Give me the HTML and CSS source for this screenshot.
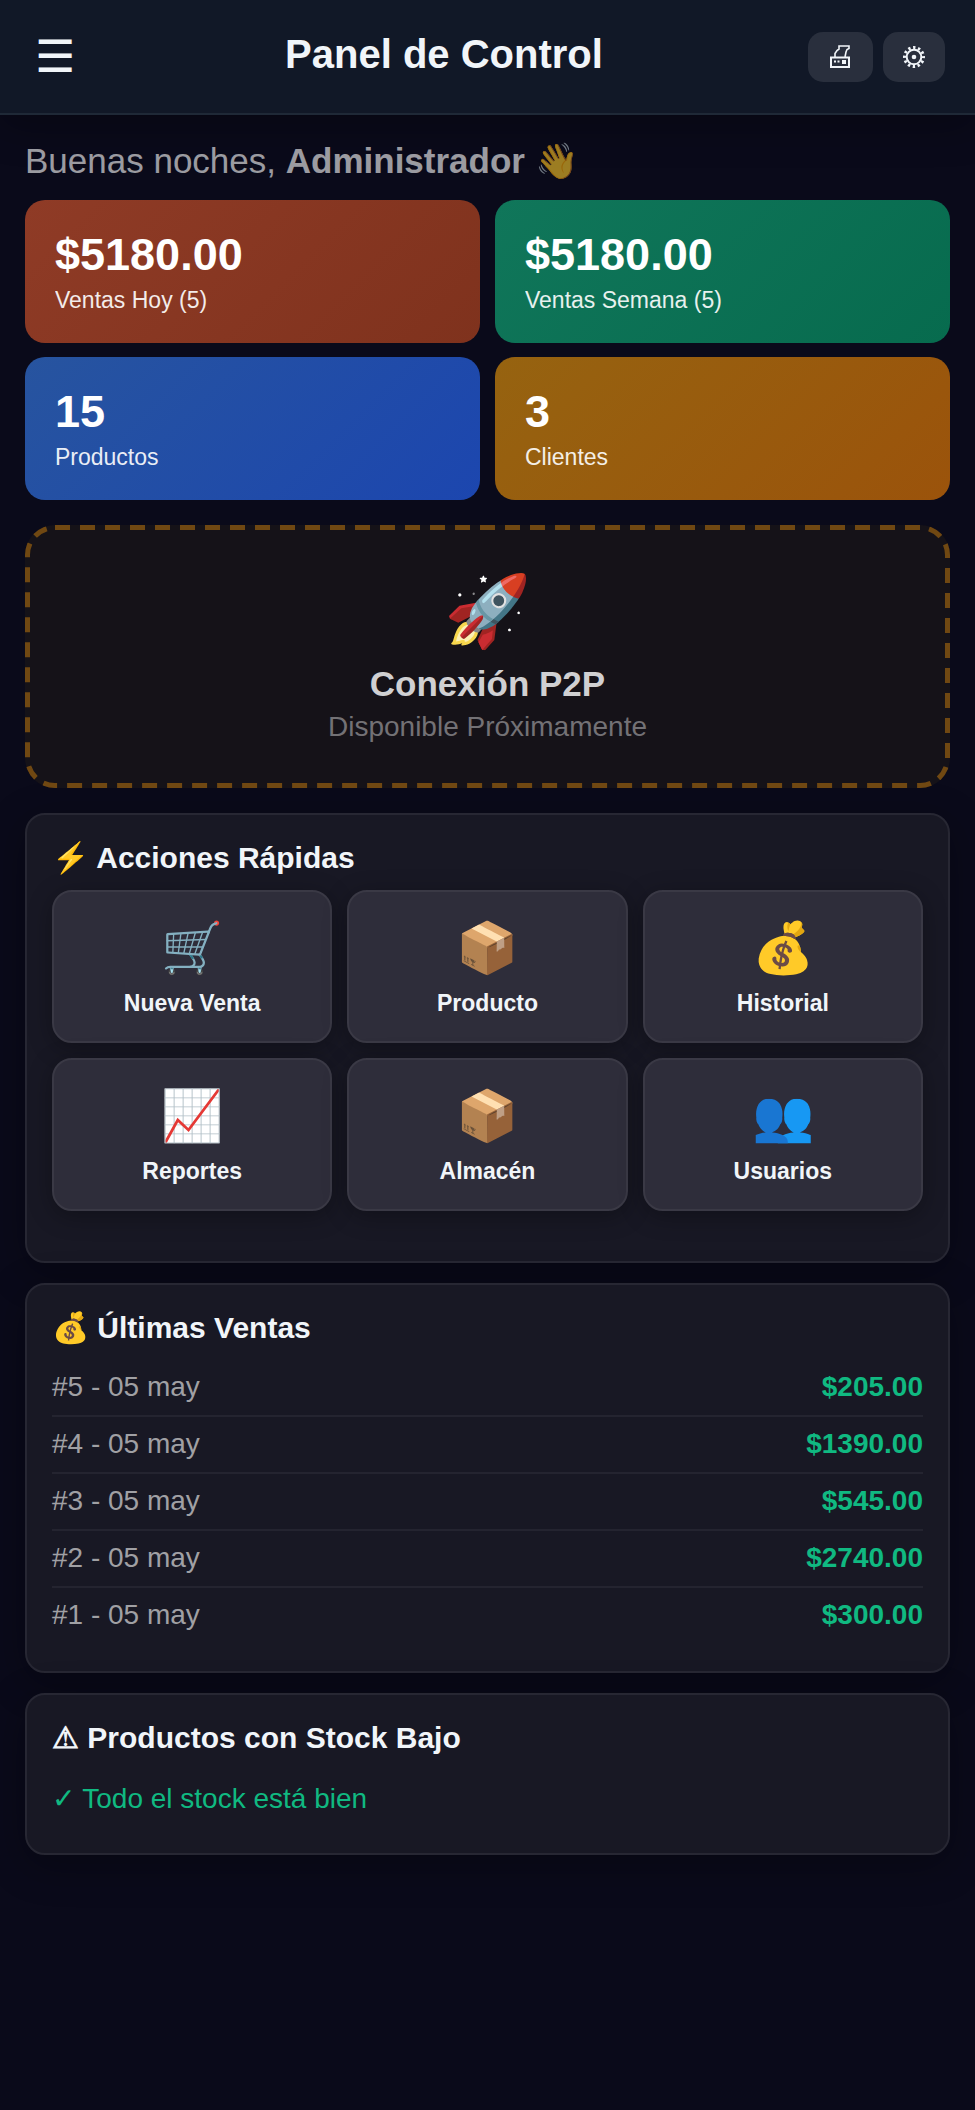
FILE: index.html
```
<!DOCTYPE html>
<html lang="es">
<head>
    <meta charset="UTF-8">
    <meta name="viewport" content="width=device-width, initial-scale=1.0">
    <title>Panel de Control</title>
    <link rel="stylesheet" href="styles.css">
</head>
<body>
    <header class="header">
        <button class="menu-btn" type="button" aria-label="Menú">☰</button>
        <h1>Panel de Control</h1>
        <div class="header-actions">
            <button class="header-btn" type="button" aria-label="Imprimir">
                <svg width="25" height="25" viewBox="-2 -1 25 25" fill="none" stroke="currentColor" stroke-width="1.6">
                    <path d="M1 12.5h18v9.5H1z" stroke-width="2"/>
                    <path d="M5 12V8.5L7 5.5 9 4V1h10v2.5l-2 1-1 2.5-1 5"/>
                    <path d="M4 15.5h2v2H4zM7.5 15.5h2v2h-2zM12 15h4v4h-4z" fill="currentColor" stroke="none"/>
                </svg>
            </button>
            <button class="header-btn" type="button" aria-label="Ajustes">
                <svg width="22" height="22" viewBox="0 0 22 22" fill="none" stroke="currentColor">
                    <circle cx="11" cy="11" r="7.3" stroke-width="2"/>
                    <circle cx="11" cy="11" r="9.5" stroke-width="3" stroke-dasharray="2.4 2.574" stroke-dashoffset="1.2"/>
                    <circle cx="11" cy="11" r="2.3" fill="currentColor" stroke="none"/>
                </svg>
            </button>
        </div>
    </header>

    <main class="content">
        <p class="greeting">Buenas noches, <strong>Administrador</strong> 👋</p>

        <section class="stats">
            <div class="stat stat-today">
                <div class="stat-value">$5180.00</div>
                <div class="stat-label">Ventas Hoy (5)</div>
            </div>
            <div class="stat stat-week">
                <div class="stat-value">$5180.00</div>
                <div class="stat-label">Ventas Semana (5)</div>
            </div>
            <div class="stat stat-products">
                <div class="stat-value">15</div>
                <div class="stat-label">Productos</div>
            </div>
            <div class="stat stat-clients">
                <div class="stat-value">3</div>
                <div class="stat-label">Clientes</div>
            </div>
        </section>

        <section class="p2p">
            <svg class="p2p-border" aria-hidden="true">
                <rect width="100%" height="100%" rx="30"/>
            </svg>
            <div class="p2p-icon">🚀</div>
            <h2>Conexión P2P</h2>
            <p>Disponible Próximamente</p>
        </section>

        <section class="card">
            <h2 class="card-title">⚡ Acciones Rápidas</h2>
            <div class="actions">
                <button class="action" type="button"><span class="action-icon">🛒</span>Nueva Venta</button>
                <button class="action" type="button"><span class="action-icon">📦</span>Producto</button>
                <button class="action" type="button"><span class="action-icon">💰</span>Historial</button>
                <button class="action" type="button"><span class="action-icon">📈</span>Reportes</button>
                <button class="action" type="button"><span class="action-icon">📦</span>Almacén</button>
                <button class="action" type="button"><span class="action-icon">👥</span>Usuarios</button>
            </div>
        </section>

        <section class="card">
            <h2 class="card-title">💰 Últimas Ventas</h2>
            <ul class="sales">
                <li><span>#5 - 05 may</span><strong>$205.00</strong></li>
                <li><span>#4 - 05 may</span><strong>$1390.00</strong></li>
                <li><span>#3 - 05 may</span><strong>$545.00</strong></li>
                <li><span>#2 - 05 may</span><strong>$2740.00</strong></li>
                <li><span>#1 - 05 may</span><strong>$300.00</strong></li>
            </ul>
        </section>

        <section class="card">
            <h2 class="card-title">⚠ Productos con Stock Bajo</h2>
            <p class="stock-ok">✓ Todo el stock está bien</p>
        </section>
    </main>
</body>
</html>
```
FILE: styles.css
```
* {
    box-sizing: border-box;
    margin: 0;
    padding: 0;
}

body {
    font-family: "Liberation Sans", Arial, sans-serif;
    background: #0a0a1a;
    color: #f1f5f9;
    min-height: 100vh;
}

button {
    font-family: inherit;
    color: inherit;
    border: none;
    cursor: pointer;
}

/* Header */
.header {
    display: flex;
    align-items: center;
    justify-content: space-between;
    padding: 30px;
    background: #111827;
    border-bottom: 2px solid #1f2937;
    box-shadow: 0 10px 40px rgba(0, 0, 0, 0.3);
}

.header h1 {
    padding-bottom: 5px;
    font-size: 40px;
    line-height: 46px;
}

.menu-btn {
    background: none;
    padding: 0 5px;
    font-size: 45px;
    line-height: 53px;
}

.header-actions {
    display: flex;
    gap: 10px;
}

.header-btn {
    display: flex;
    align-items: center;
    height: 50px;
    padding: 0 20px;
    border-radius: 15px;
    background: rgba(255, 255, 255, 0.1);
}

/* Content */
.content {
    padding: 25px;
}

.greeting {
    margin-bottom: 18px;
    font-size: 35px;
    line-height: 42px;
    color: rgba(255, 255, 255, 0.6);
}

.stats {
    display: grid;
    grid-template-columns: 1fr 1fr;
    gap: 14px 15px;
    margin-bottom: 25px;
}

.stat {
    padding: 30px;
    border-radius: 20px;
    color: white;
}

.stat-today {
    background: linear-gradient(135deg, #8f3b26, #7f321d);
}

.stat-week {
    background: linear-gradient(135deg, #10765a, #076b4e);
}

.stat-products {
    background: linear-gradient(135deg, #27549f, #1c46af);
}

.stat-clients {
    background: linear-gradient(135deg, #966310, #9b530b);
}

.stat-value {
    margin-bottom: 8px;
    font-size: 45px;
    font-weight: bold;
    line-height: 50px;
}

.stat-label {
    font-size: 23px;
    line-height: 25px;
    opacity: 0.9;
}

.p2p {
    position: relative;
    overflow: hidden;
    margin-bottom: 25px;
    padding: 45px;
    border-radius: 30px;
    background: #151218;
    text-align: center;
}

/* half of the stroke is clipped by the box, so 10px draws a 5px border */
.p2p-border {
    position: absolute;
    inset: 0;
    width: 100%;
    height: 100%;
    fill: none;
    stroke: #704812;
    stroke-width: 10px;
    stroke-dasharray: 15 10;
    pointer-events: none;
}

.p2p-icon {
    margin-bottom: 12px;
    font-size: 70px;
    line-height: 82px;
    color: white;
}

.p2p h2 {
    margin-bottom: 7px;
    font-size: 35px;
    line-height: 40px;
    color: #d0d0d2;
}

.p2p p {
    font-size: 28px;
    line-height: 32px;
    color: #737175;
}

/* Cards */
.card {
    margin-bottom: 20px;
    padding: 25px 25px 27px;
    border: 2px solid #272733;
    border-radius: 20px;
    background: #181824;
    box-shadow: 0 10px 40px rgba(0, 0, 0, 0.3);
}

.card-title {
    margin-bottom: 15px;
    font-size: 30px;
    line-height: 35px;
}

.actions {
    display: grid;
    grid-template-columns: repeat(3, 1fr);
    gap: 15px;
    margin-bottom: 23px;
}

.action {
    padding: 25px 10px;
    border: 2px solid #3a3945;
    border-radius: 20px;
    background: #2e2d3a;
    box-shadow: 0 5px 25px rgba(0, 0, 0, 0.3);
    font-size: 23px;
    font-weight: bold;
    line-height: 26px;
}

.action-icon {
    display: block;
    margin-bottom: 10px;
    font-size: 50px;
    font-weight: normal;
    line-height: 63px;
}

.sales {
    list-style: none;
}

.sales li {
    display: flex;
    justify-content: space-between;
    padding: 11px 0 12px;
    border-bottom: 2px solid #242430;
    font-size: 28px;
    line-height: 32px;
    color: #a0a0a4;
}

.sales li:last-child {
    border-bottom: none;
    padding-bottom: 13px;
}

.sales strong {
    color: #10b981;
}

.stock-ok {
    padding: 13px 0 11px;
    font-size: 28px;
    line-height: 32px;
    color: #10b981;
}
```
